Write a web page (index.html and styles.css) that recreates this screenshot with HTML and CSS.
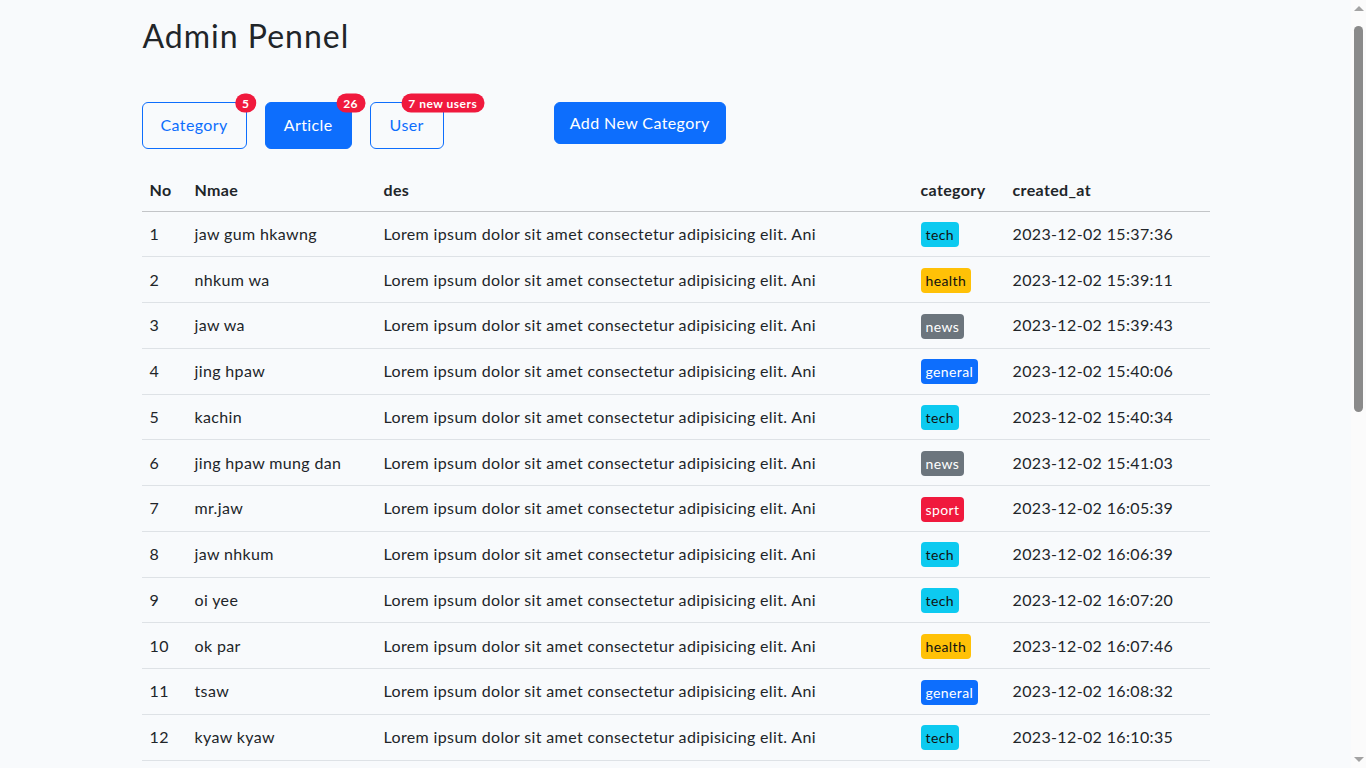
FILE: index.html
```html
<!DOCTYPE html>
<html lang="en">
<head>
<meta charset="utf-8">
<title>Admin Pennel</title>
<link rel="stylesheet" href="styles.css">
</head>
<body>
<div class="container">
  <h1 class="title">Admin Pennel</h1>
  <div class="toolbar">
    <div class="tabs">
      <a class="btn btn-outline">Category<span class="pill">5</span></a>
      <a class="btn btn-solid">Article<span class="pill">26</span></a>
      <a class="btn btn-outline btn-user">User<span class="pill">7 new users</span></a>
    </div>
    <a class="btn btn-add">Add New Category</a>
  </div>
  <table class="table">
    <colgroup>
      <col class="c-no"><col class="c-name"><col class="c-des"><col class="c-cat"><col class="c-date">
    </colgroup>
    <thead>
      <tr><th>No</th><th>Nmae</th><th>des</th><th>category</th><th>created_at</th></tr>
    </thead>
    <tbody>
      <tr><td>1</td><td>jaw gum hkawng</td><td>Lorem ipsum dolor sit amet consectetur adipisicing elit. Ani</td><td><span class="tag tag-tech">tech</span></td><td>2023-12-02 15:37:36</td></tr>
      <tr><td>2</td><td>nhkum wa</td><td>Lorem ipsum dolor sit amet consectetur adipisicing elit. Ani</td><td><span class="tag tag-health">health</span></td><td>2023-12-02 15:39:11</td></tr>
      <tr><td>3</td><td>jaw wa</td><td>Lorem ipsum dolor sit amet consectetur adipisicing elit. Ani</td><td><span class="tag tag-news">news</span></td><td>2023-12-02 15:39:43</td></tr>
      <tr><td>4</td><td>jing hpaw</td><td>Lorem ipsum dolor sit amet consectetur adipisicing elit. Ani</td><td><span class="tag tag-general">general</span></td><td>2023-12-02 15:40:06</td></tr>
      <tr><td>5</td><td>kachin</td><td>Lorem ipsum dolor sit amet consectetur adipisicing elit. Ani</td><td><span class="tag tag-tech">tech</span></td><td>2023-12-02 15:40:34</td></tr>
      <tr><td>6</td><td>jing hpaw mung dan</td><td>Lorem ipsum dolor sit amet consectetur adipisicing elit. Ani</td><td><span class="tag tag-news">news</span></td><td>2023-12-02 15:41:03</td></tr>
      <tr><td>7</td><td>mr.jaw</td><td>Lorem ipsum dolor sit amet consectetur adipisicing elit. Ani</td><td><span class="tag tag-sport">sport</span></td><td>2023-12-02 16:05:39</td></tr>
      <tr><td>8</td><td>jaw nhkum</td><td>Lorem ipsum dolor sit amet consectetur adipisicing elit. Ani</td><td><span class="tag tag-tech">tech</span></td><td>2023-12-02 16:06:39</td></tr>
      <tr><td>9</td><td>oi yee</td><td>Lorem ipsum dolor sit amet consectetur adipisicing elit. Ani</td><td><span class="tag tag-tech">tech</span></td><td>2023-12-02 16:07:20</td></tr>
      <tr><td>10</td><td>ok par</td><td>Lorem ipsum dolor sit amet consectetur adipisicing elit. Ani</td><td><span class="tag tag-health">health</span></td><td>2023-12-02 16:07:46</td></tr>
      <tr><td>11</td><td>tsaw</td><td>Lorem ipsum dolor sit amet consectetur adipisicing elit. Ani</td><td><span class="tag tag-general">general</span></td><td>2023-12-02 16:08:32</td></tr>
      <tr><td>12</td><td>kyaw kyaw</td><td>Lorem ipsum dolor sit amet consectetur adipisicing elit. Ani</td><td><span class="tag tag-tech">tech</span></td><td>2023-12-02 16:10:35</td></tr>
      <tr><td>13</td><td>hkawn nu</td><td>Lorem ipsum dolor sit amet consectetur adipisicing elit. Ani</td><td><span class="tag tag-sport">sport</span></td><td>2023-12-02 16:11:02</td></tr>
      <tr><td>14</td><td>lahpai naw</td><td>Lorem ipsum dolor sit amet consectetur adipisicing elit. Ani</td><td><span class="tag tag-news">news</span></td><td>2023-12-02 16:12:18</td></tr>
      <tr><td>15</td><td>seng mai</td><td>Lorem ipsum dolor sit amet consectetur adipisicing elit. Ani</td><td><span class="tag tag-general">general</span></td><td>2023-12-02 16:13:45</td></tr>
      <tr><td>16</td><td>brang seng</td><td>Lorem ipsum dolor sit amet consectetur adipisicing elit. Ani</td><td><span class="tag tag-tech">tech</span></td><td>2023-12-02 16:15:09</td></tr>
      <tr><td>17</td><td>ja seng</td><td>Lorem ipsum dolor sit amet consectetur adipisicing elit. Ani</td><td><span class="tag tag-health">health</span></td><td>2023-12-02 16:16:27</td></tr>
      <tr><td>18</td><td>naw awn</td><td>Lorem ipsum dolor sit amet consectetur adipisicing elit. Ani</td><td><span class="tag tag-tech">tech</span></td><td>2023-12-02 16:18:40</td></tr>
      <tr><td>19</td><td>zau ring</td><td>Lorem ipsum dolor sit amet consectetur adipisicing elit. Ani</td><td><span class="tag tag-sport">sport</span></td><td>2023-12-02 16:20:11</td></tr>
      <tr><td>20</td><td>hpaw lum</td><td>Lorem ipsum dolor sit amet consectetur adipisicing elit. Ani</td><td><span class="tag tag-news">news</span></td><td>2023-12-02 16:21:56</td></tr>
      <tr><td>21</td><td>ja tawng</td><td>Lorem ipsum dolor sit amet consectetur adipisicing elit. Ani</td><td><span class="tag tag-general">general</span></td><td>2023-12-02 16:23:04</td></tr>
      <tr><td>22</td><td>roi ja</td><td>Lorem ipsum dolor sit amet consectetur adipisicing elit. Ani</td><td><span class="tag tag-tech">tech</span></td><td>2023-12-02 16:24:38</td></tr>
      <tr><td>23</td><td>gum seng</td><td>Lorem ipsum dolor sit amet consectetur adipisicing elit. Ani</td><td><span class="tag tag-health">health</span></td><td>2023-12-02 16:26:15</td></tr>
      <tr><td>24</td><td>mung lum</td><td>Lorem ipsum dolor sit amet consectetur adipisicing elit. Ani</td><td><span class="tag tag-tech">tech</span></td><td>2023-12-02 16:27:49</td></tr>
      <tr><td>25</td><td>tu raw</td><td>Lorem ipsum dolor sit amet consectetur adipisicing elit. Ani</td><td><span class="tag tag-news">news</span></td><td>2023-12-02 16:29:03</td></tr>
      <tr><td>26</td><td>la ja</td><td>Lorem ipsum dolor sit amet consectetur adipisicing elit. Ani</td><td><span class="tag tag-sport">sport</span></td><td>2023-12-02 16:30:22</td></tr>
    </tbody>
  </table>
</div>
<div class="scrollbar" aria-hidden="true">
  <span class="sb-arrow sb-up"></span>
  <span class="sb-thumb"></span>
  <span class="sb-arrow sb-down"></span>
</div>
</body>
</html>
```

FILE: styles.css
```css
* { box-sizing: border-box; }

html, body {
  margin: 0;
  padding: 0;
  background: #f8fafc;
}

body {
  padding-right: 15px;
  font-family: "Lato", "Noto Sans", sans-serif;
  font-size: 16px;
  line-height: 1.5;
  letter-spacing: 0.36px;
  color: #212529;
}

.container {
  width: 1068px;
  margin: 0 auto;
  padding: 14px 0 16px;
}

.title {
  margin: 0 0 0 1px;
  font-size: 32px;
  font-weight: 400;
  line-height: 44px;
  letter-spacing: 1px;
  color: #212529;
}

.toolbar {
  display: flex;
  align-items: flex-start;
  gap: 110px;
  margin-top: 44px;
}

.tabs {
  display: flex;
  gap: 18px;
}

.btn {
  position: relative;
  display: inline-block;
  border: 1px solid #0d6efd;
  border-radius: 6px;
  font-size: 16px;
  line-height: 24px;
  letter-spacing: 0.4px;
  text-decoration: none;
  cursor: pointer;
}

.btn-outline {
  height: 47px;
  padding: 10px 18px;
  color: #0d6efd;
  background: transparent;
}

.btn-user {
  padding: 10px 19px;
}

.btn-solid {
  height: 47px;
  padding: 10px 18px;
  color: #fff;
  background: #0d6efd;
}

.btn-add {
  height: 42px;
  padding: 8px 15px;
  color: #fff;
  background: #0d6efd;
}

.pill {
  position: absolute;
  top: 0;
  left: 100%;
  transform: translate(-50%, -50%);
  padding: 3px 7px;
  border-radius: 10px;
  background: #f0193d;
  color: #fff;
  font-size: 12px;
  font-weight: 700;
  line-height: 13px;
  letter-spacing: 0.5px;
  white-space: nowrap;
}

.table {
  width: 100%;
  margin-top: 21px;
  border-collapse: collapse;
  table-layout: fixed;
}

.c-no { width: 45px; }
.c-name { width: 189px; }
.c-des { width: 537px; }
.c-cat { width: 92px; }
.c-date { width: 205px; }

.table th,
.table td {
  padding: 0 8px;
  text-align: left;
  vertical-align: middle;
  white-space: nowrap;
  overflow: hidden;
}

.table th {
  height: 41px;
  font-weight: 700;
  border-bottom: 1px solid #c3c5c8;
}

.table td {
  height: 45.75px;
  border-bottom: 1px solid #dee2e6;
}

.tag {
  display: inline-block;
  padding: 4px 5px;
  border-radius: 4px;
  font-size: 14px;
  line-height: 17px;
  letter-spacing: 0.4px;
  vertical-align: middle;
}

.tag-tech { background: #0dcaf0; color: #111; }
.tag-health { background: #ffc107; color: #111; }
.tag-news { background: #6c757d; color: #fff; }
.tag-general { background: #0d6efd; color: #fff; }
.tag-sport { background: #f0193d; color: #fff; }

/* simulated browser scrollbar */
.scrollbar {
  position: fixed;
  top: 0;
  right: 0;
  width: 15px;
  height: 100vh;
  background: #fbfbfb;
  display: flex;
  flex-direction: column;
  align-items: center;
}

.sb-arrow {
  width: 0;
  height: 0;
  border-left: 5px solid transparent;
  border-right: 5px solid transparent;
}

.sb-up {
  margin-top: 6px;
  border-bottom: 5px solid #a3a3a3;
}

.sb-thumb {
  width: 9px;
  height: 386px;
  margin-top: 15px;
  border-radius: 5px;
  background: #8a8a8a;
}

.sb-down {
  margin-top: auto;
  margin-bottom: 6px;
  border-top: 5px solid #a3a3a3;
}
```
